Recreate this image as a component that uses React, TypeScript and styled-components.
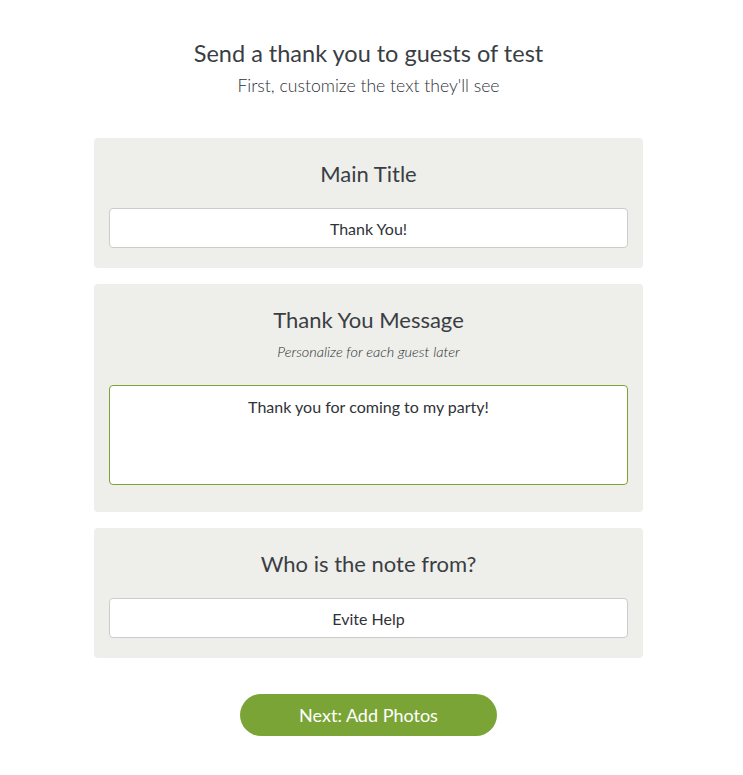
import React, { useEffect, useRef } from "react";
import styled, { createGlobalStyle } from "styled-components";

const Global = createGlobalStyle`
  html, body { margin: 0; padding: 0; background: #ffffff; }
  body { font-family: Lato, "Open Sans", "Liberation Sans", sans-serif; color: #3c4045; }
  * { box-sizing: border-box; }
`;

const Page = styled.div`
  width: 737px;
  display: flex;
  flex-direction: column;
  align-items: center;
  padding-top: 38px;
`;

const Heading = styled.h1`
  margin: 0;
  font-size: 23.5px;
  line-height: 30px;
  font-weight: 400;
  color: #3a3e44;
`;

const Sub = styled.p`
  margin: 7px 0 0;
  font-size: 17.6px;
  line-height: 22px;
  font-weight: 300;
  color: #2e3237;
`;

const Stack = styled.div`
  margin-top: 41px;
  width: 549px;
  display: flex;
  flex-direction: column;
  gap: 16px;
`;

const Card = styled.section`
  background: #eeeeea;
  border-radius: 4px;
  padding: 22px 15px 20px;
  display: flex;
  flex-direction: column;
  align-items: stretch;
`;

const CardTitle = styled.h2`
  margin: 0;
  text-align: center;
  font-size: 22px;
  line-height: 28px;
  font-weight: 400;
  color: #3a3e44;
`;

const Hint = styled.p`
  margin: 9px 0 0;
  text-align: center;
  font-size: 14.5px;
  line-height: 18px;
  font-style: italic;
  font-weight: 300;
  color: #2a2e33;
`;

const Field = styled.input`
  margin-top: 20px;
  height: 40px;
  width: 100%;
  border: 1px solid #cccccc;
  border-radius: 4px;
  background: #ffffff;
  text-align: center;
  font-family: inherit;
  font-size: 16px;
  color: #2f3338;
  outline: none;
`;

const Area = styled.textarea`
  margin-top: 24px;
  margin-bottom: 7px;
  height: 100px;
  width: 100%;
  border: 1px solid #7aa536;
  border-radius: 4px;
  background: #ffffff;
  text-align: center;
  font-family: inherit;
  font-size: 16px;
  line-height: 20px;
  padding: 11px 12px;
  color: #2f3338;
  caret-color: #2f3338;
  resize: none;
  outline: none;
`;

const NextButton = styled.button`
  margin-top: 36px;
  width: 257px;
  height: 42px;
  border: none;
  border-radius: 21px;
  background: #7aa536;
  color: #ffffff;
  font-family: inherit;
  font-size: 18px;
  font-weight: 400;
  cursor: pointer;
`;

export default function App() {
  const areaRef = useRef<HTMLTextAreaElement>(null);
  useEffect(() => {
    const el = areaRef.current;
    if (el) {
      el.focus();
      const n = el.value.length;
      el.setSelectionRange(n, n);
    }
  }, []);
  return (
    <>
      <Global />
      <Page>
        <Heading>Send a thank you to guests of test</Heading>
        <Sub>First, customize the text they'll see</Sub>
        <Stack>
          <Card>
            <CardTitle>Main Title</CardTitle>
            <Field defaultValue="Thank You!" />
          </Card>
          <Card>
            <CardTitle>Thank You Message</CardTitle>
            <Hint>Personalize for each guest later</Hint>
            <Area ref={areaRef} defaultValue="Thank you for coming to my party!" />
          </Card>
          <Card>
            <CardTitle>Who is the note from?</CardTitle>
            <Field defaultValue="Evite Help" />
          </Card>
        </Stack>
        <NextButton>Next: Add Photos</NextButton>
      </Page>
    </>
  );
}
